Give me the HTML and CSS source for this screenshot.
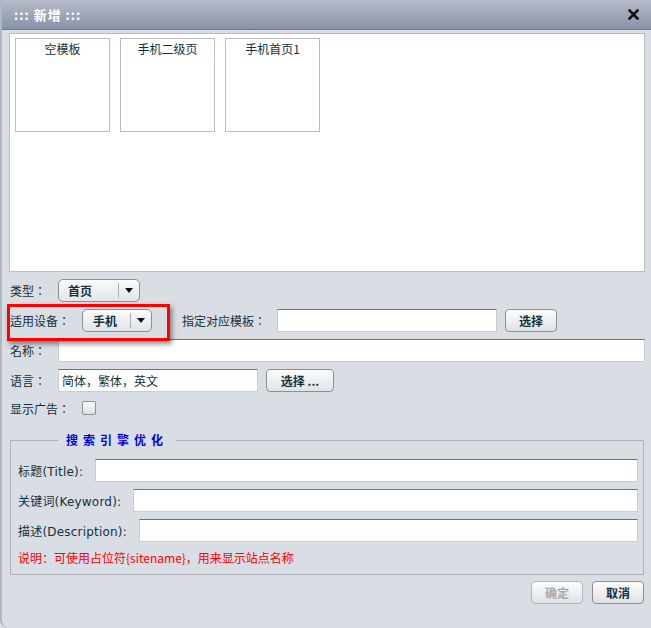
FILE: index.html
```
<!DOCTYPE html>
<html>
<head>
<meta charset="utf-8">
<link rel="stylesheet" href="styles.css">
</head>
<body>
<div class="dialog">
  <div class="header">
    <span class="title">::: 新增 :::</span>
    <svg class="close" width="11" height="11" viewBox="0 0 11 11"><path d="M1.5 1.5 L9.5 9.5 M9.5 1.5 L1.5 9.5" stroke="#111" stroke-width="2.6" stroke-linecap="square"/></svg>
  </div>
  <div class="body">
    <div class="templates">
      <div class="card">空模板</div>
      <div class="card">手机二级页</div>
      <div class="card">手机首页1</div>
    </div>

    <div class="row r1">
      <span class="lbl cjk">类型：</span>
      <div class="select w82"><span class="sel-text">首页</span><span class="sel-arrow"><i class="tri"></i></span></div>
    </div>
    <div class="row">
      <span class="lbl cjk">适用设备：</span>
      <div class="select w70"><span class="sel-text">手机</span><span class="sel-arrow"><i class="tri"></i></span></div>
      <span class="lbl lbl2 cjk">指定对应模板：</span>
      <div class="input w220"></div>
      <div class="btn w52">选择</div>
    </div>
    <div class="row">
      <span class="lbl cjk">名称：</span>
      <div class="input grow"></div>
    </div>
    <div class="row">
      <span class="lbl cjk">语言：</span>
      <div class="input w200"><span class="val">简体，繁体，英文</span></div>
      <div class="btn w68">选择 ...</div>
    </div>
    <div class="row r5">
      <span class="lbl cjk">显示广告：</span>
      <span class="check"></span>
    </div>

    <fieldset class="seo">
      <legend>搜索引擎优化</legend>
      <div class="row frow">
        <span class="lbl">标题(Title):</span>
        <div class="input grow"></div>
      </div>
      <div class="row frow">
        <span class="lbl">关键词(Keyword):</span>
        <div class="input grow"></div>
      </div>
      <div class="row frow">
        <span class="lbl">描述(Description):</span>
        <div class="input grow"></div>
      </div>
      <div class="note">说明：可使用占位符{sitename}，用来显示站点名称</div>
    </fieldset>

    <div class="footer">
      <div class="btn w52 disabled">确定</div>
      <div class="btn w52">取消</div>
    </div>
  </div>
  <div class="highlight"></div>
</div>
</body>
</html>
```
FILE: styles.css
```
html, body {
  margin: 0;
  padding: 0;
  background: #d9dde4;
}
body {
  font-family: "DejaVu Sans", "Noto Sans CJK SC", sans-serif;
  font-size: 12px;
  color: #15303a;
}
.cjk {
  font-family: "Noto Sans CJK JP", "Noto Sans CJK SC", sans-serif;
}
.dialog {
  position: relative;
  width: 651px;
  height: 628px;
  box-sizing: border-box;
  background: #d9dde4;
  border-left: 2px solid #b3b8c0;
  border-bottom-left-radius: 8px;
  overflow: hidden;
}
.header {
  height: 29px;
  border-bottom: 1px solid #6d7890;
  background: linear-gradient(#b6bbc9, #8893a9);
  display: flex;
  align-items: center;
  justify-content: space-between;
  padding: 0 12px 0 12px;
}
.title {
  color: #fff;
  font-weight: bold;
  font-size: 13px;
  font-family: "Noto Sans CJK SC", sans-serif;
  letter-spacing: 1px;
}
.close {
  display: block;
  margin-top: -1px;
}
.body {
  padding: 3px 6px 0 7px;
}
.templates {
  height: 239px;
  box-sizing: border-box;
  border: 1px solid #b8bcc2;
  background: #fff;
  padding: 4px 5px;
  display: flex;
  gap: 10px;
  align-items: flex-start;
}
.card {
  width: 95px;
  height: 94px;
  box-sizing: border-box;
  border: 1px solid #bcbcbc;
  text-align: center;
  padding-top: 2px;
  line-height: 16px;
  font-family: "Noto Sans CJK SC", sans-serif;
}
.row {
  display: flex;
  align-items: center;
  height: 23px;
  margin-top: 7px;
  padding-left: 1px;
}
.row.r1 {
  margin-top: 7px;
}
.row.r5 {
  height: 18px;
}
.lbl {
  margin-right: 12px;
  white-space: nowrap;
}
.lbl2 {
  margin-left: 30px;
  margin-right: 11px;
}
.select {
  height: 23px;
  box-sizing: border-box;
  border: 1px solid #8a8f97;
  border-radius: 5px;
  background: linear-gradient(#fbfbfc, #e2e4e8);
  display: flex;
  align-items: center;
  font-weight: bold;
  font-family: "Noto Sans CJK SC", sans-serif;
}
.sel-text {
  flex: 1;
  padding-left: 9px;
}
.sel-arrow {
  width: 20px;
  height: 15px;
  border-left: 1px solid #a9adb4;
  display: flex;
  align-items: center;
  justify-content: center;
}
.tri {
  width: 0;
  height: 0;
  border-left: 4px solid transparent;
  border-right: 4px solid transparent;
  border-top: 5px solid #111;
}
.w82 { width: 82px; }
.w70 { width: 70px; }
.w70 .sel-text { padding-left: 10px; }
.input {
  height: 23px;
  box-sizing: border-box;
  background: #fff;
  border: 1px solid #c9ccd1;
  border-top-color: #6f7378;
  display: flex;
  align-items: center;
}
.w220 { width: 220px; }
.w200 { width: 200px; }
.grow { flex: 1; }
.val {
  padding-left: 3px;
  font-family: "Noto Sans CJK SC", sans-serif;
}
.btn {
  height: 23px;
  box-sizing: border-box;
  border: 1px solid #8b9097;
  border-radius: 4px;
  background: linear-gradient(#fdfdfd, #dfe2e6);
  display: flex;
  align-items: center;
  justify-content: center;
  font-weight: bold;
  margin-left: 8px;
  font-family: "Noto Sans CJK SC", sans-serif;
}
.w52 { width: 52px; }
.w68 { width: 68px; }
.btn.disabled {
  color: #a5aaaf;
  border-color: #b2b6bc;
}
.check {
  width: 14px;
  height: 14px;
  box-sizing: border-box;
  border: 1px solid #8c9096;
  border-radius: 2px;
  background: linear-gradient(#fbfbfb, #dcdfe3);
}
.seo {
  margin: 16px 1px 0 1px;
  padding: 12px 5px 8px 7px;
  border: 1px solid #b0b4ba;
  min-width: 0;
}
.seo legend {
  margin-left: 40px;
  padding: 0 8px;
  color: #0000ee;
  font-weight: bold;
  letter-spacing: 5px;
  line-height: 14px;
  font-family: "Noto Sans CJK SC", sans-serif;
}
.frow {
  padding-left: 0;
}
.frow .lbl {
  letter-spacing: 0.2px;
}
.frow:first-of-type {
  margin-top: 0;
}
.note {
  margin-top: 8px;
  line-height: 16px;
  color: #ff0000;
  font-family: "Noto Sans CJK SC", sans-serif;
}
.footer {
  display: flex;
  justify-content: flex-end;
  margin-top: 6px;
  padding-right: 1px;
}
.footer .btn {
  margin-left: 9px;
}
.highlight {
  position: absolute;
  left: 5px;
  top: 304px;
  width: 163px;
  height: 37px;
  box-sizing: border-box;
  border: 3px solid #ff0000;
  box-shadow: 2px 3px 5px rgba(0,0,0,0.45);
}
```
